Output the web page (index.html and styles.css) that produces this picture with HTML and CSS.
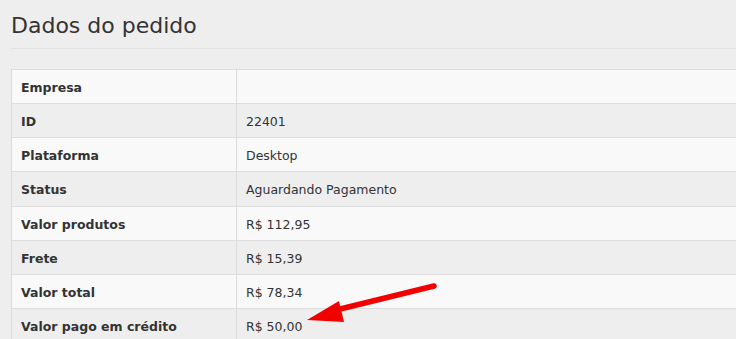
FILE: index.html
```html
<!DOCTYPE html>
<html lang="pt">
<head>
<meta charset="utf-8">
<link rel="stylesheet" href="styles.css">
</head>
<body>
<div class="page">
  <h1 class="title">Dados do pedido</h1>
  <table class="details">
    <tr class="odd"><th>Empresa</th><td></td></tr>
    <tr class="even"><th>ID</th><td>22401</td></tr>
    <tr class="odd"><th>Plataforma</th><td>Desktop</td></tr>
    <tr class="even"><th>Status</th><td>Aguardando Pagamento</td></tr>
    <tr class="odd"><th>Valor produtos</th><td>R$ 112,95</td></tr>
    <tr class="even"><th>Frete</th><td>R$ 15,39</td></tr>
    <tr class="odd"><th>Valor total</th><td>R$ 78,34</td></tr>
    <tr class="even"><th>Valor pago em crédito</th><td>R$ 50,00</td></tr>
  </table>
  <svg class="arrow" width="736" height="339" viewBox="0 0 736 339">
    <line x1="434" y1="286" x2="332" y2="311" stroke="#f20000" stroke-width="5.5" stroke-linecap="round"/>
    <polygon points="307,320 339,301 344,322" fill="#f20000"/>
  </svg>
</div>
</body>
</html>
```
FILE: styles.css
```css
html, body {
  margin: 0;
  padding: 0;
  background: #eeeeee;
}
.page {
  position: relative;
  width: 736px;
  height: 339px;
  overflow: hidden;
  padding: 0 0 0 11px;
  box-sizing: border-box;
  font-family: "DejaVu Sans", Verdana, sans-serif;
  color: #333333;
}
.title {
  margin: 0;
  padding: 12px 0 9px 0;
  font-size: 22px;
  font-weight: normal;
  line-height: 27px;
  color: #333333;
  border-bottom: 1px solid #e2e2e2;
}
.details {
  margin-top: 20px;
  width: 900px;
  border-collapse: collapse;
  font-size: 12.5px;
}
.details th,
.details td {
  border: 1px solid #dddddd;
  padding: 2px 9px 0 9px;
  height: 34.15px;
  text-align: left;
  vertical-align: middle;
  box-sizing: border-box;
}
.details th {
  width: 225px;
  font-weight: bold;
}
.details tr.odd {
  background: #f9f9f9;
}
.details tr.even {
  background: #eeeeee;
}
.arrow {
  position: absolute;
  left: 0;
  top: 0;
}
```
